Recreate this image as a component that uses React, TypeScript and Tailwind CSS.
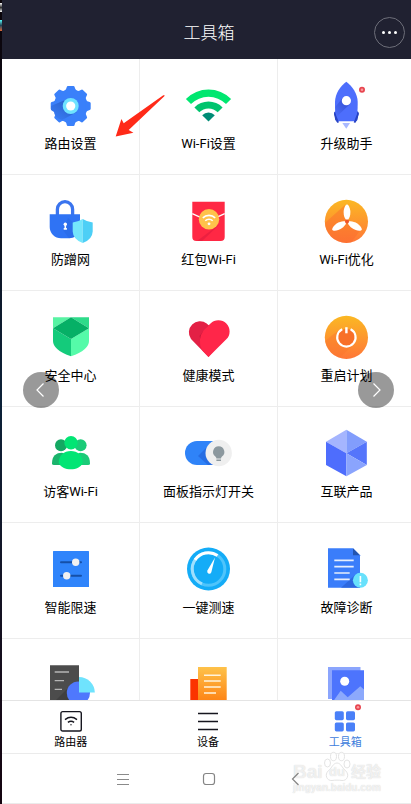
import type { ReactNode } from "react";

type Tool = { name: string; label?: string; icon: ReactNode };

function Icon({ children }: { children: ReactNode }) {
  return (
    <svg viewBox="0 0 49 49" className="size-[49px] shrink-0 overflow-visible" aria-hidden="true">
      {children}
    </svg>
  );
}

function NoticeDot({ cx, cy }: { cx: number; cy: number }) {
  return (
    <g>
      <circle cx={cx} cy={cy} r="3" fill="#e8454f" />
      <circle cx={cx} cy={cy} r="1.3" fill="#f79a9d" />
    </g>
  );
}

const GearIcon = (
  <Icon>
    <g fill="#3a80fa" transform="translate(24.7 24)">
      <circle r="16.8" />
      {[0, 45, 90, 135, 180, 225, 270, 315].map((angle) => (
        <path
          key={angle}
          transform={`rotate(${angle})`}
          d="M-6.5 -14.5 Q-4.4 -16.4 -3.9 -19 Q-3.7 -20 -2.8 -20 H2.8 Q3.7 -20 3.9 -19 Q4.4 -16.4 6.5 -14.5 Z"
        />
      ))}
    </g>
    <path d="M5 24 L19 18 L31 30 L16 38 Q8 35 8 30 L5 28 Z" fill="url(#gearShade)" />
    <circle cx="24.7" cy="24" r="8" fill="#6fe3ff" />
    <circle cx="24.7" cy="24" r="4.6" fill="#fff" />
    <defs>
      <linearGradient id="gearShade" x1="1" y1="0" x2="0" y2="1">
        <stop offset="0.2" stopColor="#2a62cd" />
        <stop offset="1" stopColor="#3a80fa" />
      </linearGradient>
    </defs>
  </Icon>
);

const WifiIcon = (
  <Icon>
    <path d="M1.9 16.9 A32 32 0 0 1 47.1 16.9 L42 22 A24.8 24.8 0 0 0 7 22 Z" fill="#00e770" />
    <path d="M10.4 25.4 A20 20 0 0 1 38.6 25.4 L33.7 30.3 A13 13 0 0 0 15.3 30.3 Z" fill="#00c46e" />
    <path d="M18.2 33.2 A8.9 8.9 0 0 1 30.8 33.2 L24.5 39.5 Z" fill="#008c76" />
  </Icon>
);

const RocketIcon = (
  <Icon>
    <path d="M13.5 29 L12 31 L13.2 38 L16 41 L16.5 34 Z M35.1 29 L36.8 31 L35.4 38 L32.7 41 L32.2 34 Z" fill="#2743c4" />
    <path d="M24.3 -0.3 C30 3.5 35.6 12 35.7 20 C35.7 28 35.4 33 34 39.3 H14.6 C13.2 33 13 28 13 20 C13 12 18.6 3.5 24.3 -0.3 Z" fill="#4d6efc" />
    <path d="M13.2 25 L21 15.5 L28 22 L14.4 35 Z" fill="url(#rocketShade)" />
    <path d="M12.6 29.5 L17 40.5 H15 L12 32 Z M36 29.5 L31.7 40.5 H33.7 L36.8 32 Z" fill="#2743c4" />
    <circle cx="24.4" cy="18.7" r="4.6" fill="#fff" />
    <path d="M20.3 41 H28 L24.3 46.7 Z" fill="#a9b9ff" />
    <NoticeDot cx={40} cy={7.7} />
    <defs>
      <linearGradient id="rocketShade" x1="1" y1="0" x2="0" y2="1">
        <stop offset="0.2" stopColor="#3552d6" />
        <stop offset="1" stopColor="#4d6efc" />
      </linearGradient>
    </defs>
  </Icon>
);

const LockIcon = (
  <Icon>
    <path d="M11.4 18 V11.2 A7.6 7.6 0 0 1 26.6 11.2 V18" fill="none" stroke="#3a74ee" strokeWidth="3.3" />
    <path d="M3.7 16.3 H34 V29 A11.3 11.3 0 0 1 22.7 40.3 H15 A11.3 11.3 0 0 1 3.7 29 Z" fill="#2f73f4" />
    <path d="M22 20 L34 30 V32 A11 11 0 0 1 23 40.3 L17 32 Z" fill="#2563dd" opacity="0.4" />
    <circle cx="19.3" cy="26.2" r="1.7" fill="#fff" />
    <path d="M18.5 26.5 H20.1 V30 H20.9 V31.8 H17.7 V30 H18.5 Z" fill="#fff" />
    <path d="M36.7 21 Q32 24 26.7 24.4 V33.5 Q27 41.5 36.7 45 Z" fill="#74e6fc" />
    <path d="M36.7 21 Q41.4 24 46.7 24.4 V33.5 Q46.4 41.5 36.7 45 Z" fill="#4dcff6" />
  </Icon>
);

const RedPacketIcon = (
  <Icon>
    <path d="M8.3 3.7 H40.7 V39 A4 4 0 0 1 36.7 43 H12.3 A4 4 0 0 1 8.3 39 Z" fill="#ff2844" />
    <path d="M33 28 L36 26 L18 43 H13 Z" fill="#e01b3d" opacity="0.6" />
    <path d="M8.3 15.6 L24.5 23 L40.7 15.6" fill="none" stroke="#fff" strokeWidth="1.3" />
    <circle cx="25" cy="21.3" r="10.2" fill="#ffc24b" />
    <g fill="none" stroke="#fff" strokeWidth="1.6">
      <path d="M18.8 19.9 A8.8 8.8 0 0 1 31.2 19.9" />
      <path d="M21.3 22.8 A5.2 5.2 0 0 1 28.7 22.8" />
    </g>
    <circle cx="25" cy="25.8" r="1.4" fill="#fff" />
  </Icon>
);

const FanIcon = (
  <Icon>
    <defs>
      <linearGradient id="sunset" x1="0" y1="0" x2="0" y2="1">
        <stop offset="0" stopColor="#fbb823" />
        <stop offset="1" stopColor="#ff7738" />
      </linearGradient>
      <clipPath id="disc">
        <circle cx="24.4" cy="23.4" r="21.6" />
      </clipPath>
    </defs>
    <circle cx="24.4" cy="23.4" r="21.6" fill="url(#sunset)" />
    <g clipPath="url(#disc)">
      <path d="M23 7 L-4 31 L8 49 H26 L39 31 L26 22 Z" fill="#fa6a2c" opacity="0.45" />
    </g>
    <g fill="#fff" transform="translate(25 23.4)">
      {[0, 120, 240].map((angle) => (
        <path
          key={angle}
          transform={`rotate(${angle})`}
          d="M-1 -1.6 C-4.2 -5 -4.2 -13 -0.9 -16.6 Q0 -17.3 0.9 -16.6 C4.2 -13 4.2 -5 1 -1.6 Z"
        />
      ))}
    </g>
    <circle cx="25" cy="23.4" r="2" fill="#f0562c" />
  </Icon>
);

const ShieldIcon = (
  <Icon>
    <path d="M7 3.3 H25 L7 14.3 Z" fill="#58f3a3" />
    <path d="M43 3.3 H25 L43 14.3 Z" fill="#2edb8a" />
    <path d="M7 14.3 L25 25 V42.3 Q7 36 7 27 Z" fill="#14cb7b" />
    <path d="M43 14.3 L25 25 V42.3 Q43 36 43 27 Z" fill="#55fba9" />
    <path d="M25 3.3 L43 14.3 L25 25 L7 14.3 Z" fill="#06b066" />
  </Icon>
);

const HeartIcon = (
  <Icon>
    <path d="M24.5 43 L7 25 A11.2 11.2 0 0 1 22.7 9.4 L26 12.5 L32 34 Z" fill="#e32045" />
    <path d="M15.5 22 L24.5 11 L27 30 L20 38 Z" fill="#c9183c" />
    <path d="M24.5 43 L42.3 25.3 A11.2 11.2 0 0 0 26.5 9.4 L19.7 16.2 Q12.5 26 18.5 36.8 Z" fill="#ff2649" />
  </Icon>
);

const PowerIcon = (
  <Icon>
    <circle cx="24.4" cy="23.4" r="21.6" fill="url(#sunset)" />
    <g clipPath="url(#disc)">
      <path d="M17 16 L-2 31 L12 49 L31 31 Z" fill="#fb722c" opacity="0.4" />
    </g>
    <circle cx="24.4" cy="23.4" r="8.5" fill="#f86f28" />
    <path d="M20.2 15.2 A9.2 9.2 0 1 0 28.6 15.2" fill="none" stroke="#fff" strokeWidth="2.1" />
    <path d="M24.4 13.2 V19.3" stroke="#fff" strokeWidth="2.4" />
  </Icon>
);

const GuestsIcon = (
  <Icon>
    <circle cx="15" cy="15.3" r="6" fill="#14a862" />
    <circle cx="34.6" cy="15.3" r="6" fill="#1bcb78" />
    <path d="M6 33.5 C6 26 10 22.8 16 22.8 L22 25 L16 35 H8 Q6 35 6 33.5 Z" fill="#1bb46c" />
    <path d="M44 33.5 C44 26 40 22.8 34 22.8 L28 25 L34 35 H42 Q44 35 44 33.5 Z" fill="#1bcb78" />
    <circle cx="25" cy="12.7" r="6.7" fill="#02e574" />
    <path d="M12.7 32.5 C13 25 18 21 24.8 21 C31.6 21 36.5 25 36.8 32.5 C35 37.5 30 39.3 24.8 39.3 C19.6 39.3 14.5 37.5 12.7 32.5 Z" fill="#02e574" />
  </Icon>
);

const LampIcon = (
  <Icon>
    <path d="M13 11 H36 V35 H13 A12 12 0 0 1 13 11 Z" fill="#2f83f8" />
    <path d="M14 26 L25 15 L36 12 V35 H24 Z" fill="#2465dc" opacity="0.75" />
    <circle cx="34.7" cy="23" r="13.2" fill="#efefef" />
    <path d="M34.7 16.3 A5.7 5.7 0 0 0 31.4 26.6 Q32.4 27.6 32.4 28.5 H37 Q37 27.6 38 26.6 A5.7 5.7 0 0 0 34.7 16.3 Z M32.4 29.4 H37 V31 H32.4 Z" fill="#8c989e" />
  </Icon>
);

const HexagonIcon = (
  <Icon>
    <path d="M24.4 -0.3 L4 11.7 L24.4 23.2 Z" fill="#a5b5fe" />
    <path d="M24.4 -0.3 L44.8 11.7 L24.4 23.2 Z" fill="#829dfc" />
    <path d="M4 11.7 L24.4 23.2 V46.2 L4 35 Z" fill="#4e6dfd" />
    <path d="M44.8 11.7 L24.4 23.2 L44.8 35 Z" fill="#5575fb" />
    <path d="M24.4 23.2 L44.8 35 L24.4 46.2 Z" fill="#8aa4fd" />
  </Icon>
);

const SlidersIcon = (
  <Icon>
    <rect x="7" y="5" width="36" height="36" rx="0.6" fill="#2f84fb" />
    <path d="M15 16.2 H35 M15 29.7 H35" stroke="#154fa8" strokeWidth="2" strokeLinecap="round" />
    <circle cx="29.7" cy="16.2" r="3.7" fill="#f1f1f1" />
    <circle cx="20.7" cy="29.7" r="3.7" fill="#f1f1f1" />
  </Icon>
);

const GaugeIcon = (
  <Icon>
    <circle cx="24.5" cy="23" r="21.5" fill="#14acf7" />
    <circle cx="24.5" cy="23" r="16.3" fill="none" stroke="#4fc4fb" strokeWidth="3" />
    <path d="M18 37.9 A16.3 16.3 0 0 1 12 12.6" fill="none" stroke="#9fdffd" strokeWidth="3" />
    <path d="M11 13.8 A16.3 16.3 0 0 1 33.5 9.4" fill="none" stroke="#fff" strokeWidth="3" />
    <path d="M31 11.5 L27.3 26.3 Q26.4 28.5 24.4 27.6 Q22.6 26.6 23.4 24.6 Z" fill="#fff" />
  </Icon>
);

const DiagnosisIcon = (
  <Icon>
    <path d="M6 2.3 H31 L38 9.3 V41.7 H6 Z" fill="#3a7dfa" />
    <path d="M31 2.3 L38 9.3 H31 Z" fill="#2455b0" />
    <path d="M33 29 L38 34 V41.7 H19 Z" fill="#2a63d8" opacity="0.8" />
    <path d="M12.3 14.3 H31.7 M12.3 20.7 H31.7 M12.3 27 H27.7 M12.3 33.3 H27.7" stroke="#e6eefc" strokeWidth="1.7" />
    <circle cx="38.4" cy="34.3" r="7.5" fill="#68e1fc" />
    <path d="M38.4 30 V36.3 M38.4 37.6 V39.2" stroke="#fff" strokeWidth="1.6" />
  </Icon>
);

const ReportIcon = (
  <Icon>
    <path d="M4 3.3 H33 V46 H4 Z" fill="#4c4c4c" />
    <path d="M22 26 L4 44 H33 Z" fill="#404040" />
    <path d="M8.7 10 H23 M8.7 18.7 H18 M8.7 27.3 H16" stroke="#b5b5b5" strokeWidth="1.3" />
    <circle cx="32.4" cy="31" r="11.6" fill="#4f78fd" />
    <path d="M33 30.5 V15 A15.8 15.8 0 0 1 48.8 30.5 Z" fill="#6fe3fd" />
  </Icon>
);

const ArticleIcon = (
  <Icon>
    <defs>
      <linearGradient id="paper" x1="0" y1="0" x2="0" y2="1">
        <stop offset="0" stopColor="#fec24a" />
        <stop offset="1" stopColor="#fd8012" />
      </linearGradient>
    </defs>
    <rect x="6.3" y="17" width="9" height="24" fill="#fb3300" />
    <rect x="14" y="5" width="28.7" height="36" fill="url(#paper)" />
    <path d="M20 13.3 H36.7 M20 19 H36.7 M20 25 H36.7 M20 31 H32" stroke="#fff3dc" strokeWidth="1.6" />
  </Icon>
);

const GalleryIcon = (
  <Icon>
    <path d="M6 5 H38.5 V37 H6 Z" fill="#8ba5fd" />
    <path d="M10 8.3 H42 V42 H10 Z" fill="#4d74fd" />
    <path d="M10 41 L18.7 28.7 L25.7 35.3 L38.3 24.3 L42 27.5 V42 H10 Z" fill="#8ca9fc" />
    <circle cx="22.7" cy="19.3" r="4.5" fill="#fff" />
  </Icon>
);

const tools: Tool[] = [
  { name: "settings", label: "路由设置", icon: GearIcon },
  { name: "wifi", label: "Wi-Fi设置", icon: WifiIcon },
  { name: "upgrade", label: "升级助手", icon: RocketIcon },
  { name: "guard", label: "防蹭网", icon: LockIcon },
  { name: "packet", label: "红包Wi-Fi", icon: RedPacketIcon },
  { name: "optimize", label: "Wi-Fi优化", icon: FanIcon },
  { name: "security", label: "安全中心", icon: ShieldIcon },
  { name: "health", label: "健康模式", icon: HeartIcon },
  { name: "restart", label: "重启计划", icon: PowerIcon },
  { name: "guests", label: "访客Wi-Fi", icon: GuestsIcon },
  { name: "lamp", label: "面板指示灯开关", icon: LampIcon },
  { name: "products", label: "互联产品", icon: HexagonIcon },
  { name: "limit", label: "智能限速", icon: SlidersIcon },
  { name: "speed", label: "一键测速", icon: GaugeIcon },
  { name: "diagnosis", label: "故障诊断", icon: DiagnosisIcon },
  { name: "report", icon: ReportIcon },
  { name: "article", icon: ArticleIcon },
  { name: "gallery", icon: GalleryIcon },
];

const tabs = [
  {
    label: "路由器",
    active: false,
    icon: (
      <g fill="none" stroke="#16161f" strokeWidth="1.4">
        <rect x="0.9" y="1.6" width="20.4" height="19.4" rx="1.8" />
        <path d="M5 9.6 Q11 5 17 9.6 M7.9 12.4 Q11 10 14.1 12.4" />
        <circle cx="11" cy="14.7" r="0.7" fill="#16161f" stroke="none" />
      </g>
    ),
  },
  {
    label: "设备",
    active: false,
    icon: <path d="M1 3.5 H21 M1 11.5 H21 M1 19.5 H21" stroke="#16161f" strokeWidth="1.4" />,
  },
  {
    label: "工具箱",
    active: true,
    icon: (
      <g fill="#4a80f8">
        <rect x="0.8" y="1.2" width="9" height="9" rx="1.6" />
        <rect x="12" y="1.2" width="9" height="9" rx="1.6" />
        <rect x="0.8" y="12.4" width="9" height="9" rx="1.6" />
        <rect x="12" y="12.4" width="9" height="9" rx="1.6" />
        <NoticeDot cx={24} cy={-2.8} />
      </g>
    ),
  },
];

function Watermark() {
  return (
    <div className="pointer-events-none absolute right-[28px] bottom-[10px] w-[90px] font-['Liberation_Sans','Noto_Sans_CJK_SC',sans-serif] font-bold text-white/70 [text-shadow:0_0_1px_#ccc]">
      <div className="flex items-end leading-5">
        <span className="w-[30px] text-[19px]">Bai</span>
        <span className="relative flex h-[30px] w-[28px] items-end justify-center text-[13px]">
          <svg
            viewBox="0 0 28 34"
            className="absolute bottom-0 left-0 h-[34px] w-[28px]"
            fill="#fff"
            fillOpacity="0.7"
            stroke="#e4e4e4"
            aria-hidden="true"
          >
            <ellipse cx="4.5" cy="15" rx="3" ry="4" />
            <ellipse cx="10.5" cy="8.5" rx="3" ry="4.2" />
            <ellipse cx="18.5" cy="8.5" rx="3" ry="4.2" />
            <ellipse cx="24" cy="16" rx="3" ry="4" />
            <path d="M14 15 C18 15 19 20 22.5 22.5 C27 27 24 33 19 32.5 C16 32 12 32 9 32.5 C4 33 1 27 5.5 22.5 C9 20 10 15 14 15 Z" />
          </svg>
          <span className="relative">du</span>
        </span>
        <span className="text-[15px]">经验</span>
      </div>
      <div className="text-[10px] leading-3">jingyan.baidu.com</div>
    </div>
  );
}

export default function App() {
  return (
    <div className="relative flex h-screen overflow-hidden bg-white font-[Roboto,'Noto_Sans_CJK_SC',sans-serif] text-black">
      <div className="flex w-[2px] shrink-0 flex-col gap-2 bg-linear-to-b from-[#0a0409] via-[#0b2138] to-[#14040f] pt-[3px]">
        <span className="h-[9px] bg-linear-to-b from-white via-[#333] to-white" />
        <span className="h-[11px] bg-linear-to-b from-[#5ff] via-[#245] to-[#d63]" />
      </div>

      <div className="-mr-[5px] flex min-w-0 flex-1 flex-col">
        <header className="grid h-[59px] shrink-0 grid-cols-[1fr_auto_1fr] items-center bg-[#202131] px-[11px] pt-[6px] text-white">
          <h1 className="col-start-2 text-[17px] font-light leading-6">工具箱</h1>
          <button
            type="button"
            aria-label="更多"
            className="flex size-[31px] items-center justify-center gap-[3px] justify-self-end rounded-full border border-[#6d6e79]"
          >
            <span className="size-[3px] rounded-full bg-white" />
            <span className="size-[3px] rounded-full bg-white" />
            <span className="size-[3px] rounded-full bg-white" />
          </button>
        </header>

        <main className="grid min-h-0 flex-1 auto-rows-[116px] grid-cols-3 overflow-hidden">
          {tools.map((tool) => (
            <button
              key={tool.name}
              type="button"
              className="flex flex-col items-center gap-1 border-r border-b border-[#ededed] pt-[23px]"
            >
              {tool.icon}
              {tool.label && <span className="text-[13px] leading-[18px] whitespace-nowrap">{tool.label}</span>}
            </button>
          ))}
        </main>

        <nav className="grid h-[53px] shrink-0 grid-cols-3 border-t border-[#e4e4e4] pr-[2px]">
          {tabs.map((tab) => (
            <button key={tab.label} type="button" className="flex flex-col items-center gap-1 pt-[9px]">
              <svg viewBox="0 0 22 22" className="size-[22px] overflow-visible" aria-hidden="true">
                {tab.icon}
              </svg>
              <span className={tab.active ? "text-[11px] leading-[14px] text-[#3f80dc]" : "text-[11px] leading-[14px]"}>
                {tab.label}
              </span>
            </button>
          ))}
        </nav>

        <div className="flex h-[51px] shrink-0 items-center justify-center gap-[70px] border-y border-[#ebebeb]">
          <button type="button" aria-label="菜单">
            <svg viewBox="0 0 16 16" className="size-4" fill="none" stroke="#8a8a8a">
              <path d="M2 3.5 H14 M2 8.5 H14 M2 13.5 H14" />
            </svg>
          </button>
          <button type="button" aria-label="主页">
            <svg viewBox="0 0 16 16" className="size-4" fill="none" stroke="#858585" strokeWidth="1.2">
              <rect x="2.5" y="2.5" width="11" height="11" rx="2.5" />
            </svg>
          </button>
          <button type="button" aria-label="返回" className="relative z-10">
            <svg viewBox="0 0 16 16" className="size-4" fill="none" stroke="#858585" strokeWidth="1.2">
              <path d="M11.5 2 L5.5 8 L11.5 14" />
            </svg>
          </button>
        </div>
      </div>

      <svg
        viewBox="0 0 50 43"
        className="pointer-events-none absolute top-[94px] left-[115px] h-[43px] w-[50px]"
        aria-hidden="true"
      >
        <path d="M0.7 42.4 L6.4 25 L8.7 29.3 L48.3 1.2 L49.7 1.3 L49.3 2.3 L13.7 36 L18.4 38.7 Z" fill="#ff2a18" />
      </svg>

      <button
        type="button"
        aria-label="上一张"
        className="absolute top-[372px] left-[23px] flex size-9 items-center justify-center rounded-full bg-black/40"
      >
        <svg viewBox="0 0 16 16" className="size-4" fill="none" stroke="#fff" strokeWidth="1.2">
          <path d="M10.5 1.5 L4 8 L10.5 14.5" />
        </svg>
      </button>
      <button
        type="button"
        aria-label="下一张"
        className="absolute top-[372px] right-[17px] flex size-9 items-center justify-center rounded-full bg-black/40"
      >
        <svg viewBox="0 0 16 16" className="size-4" fill="none" stroke="#fff" strokeWidth="1.2">
          <path d="M5.5 1.5 L12 8 L5.5 14.5" />
        </svg>
      </button>

      <Watermark />
    </div>
  );
}
